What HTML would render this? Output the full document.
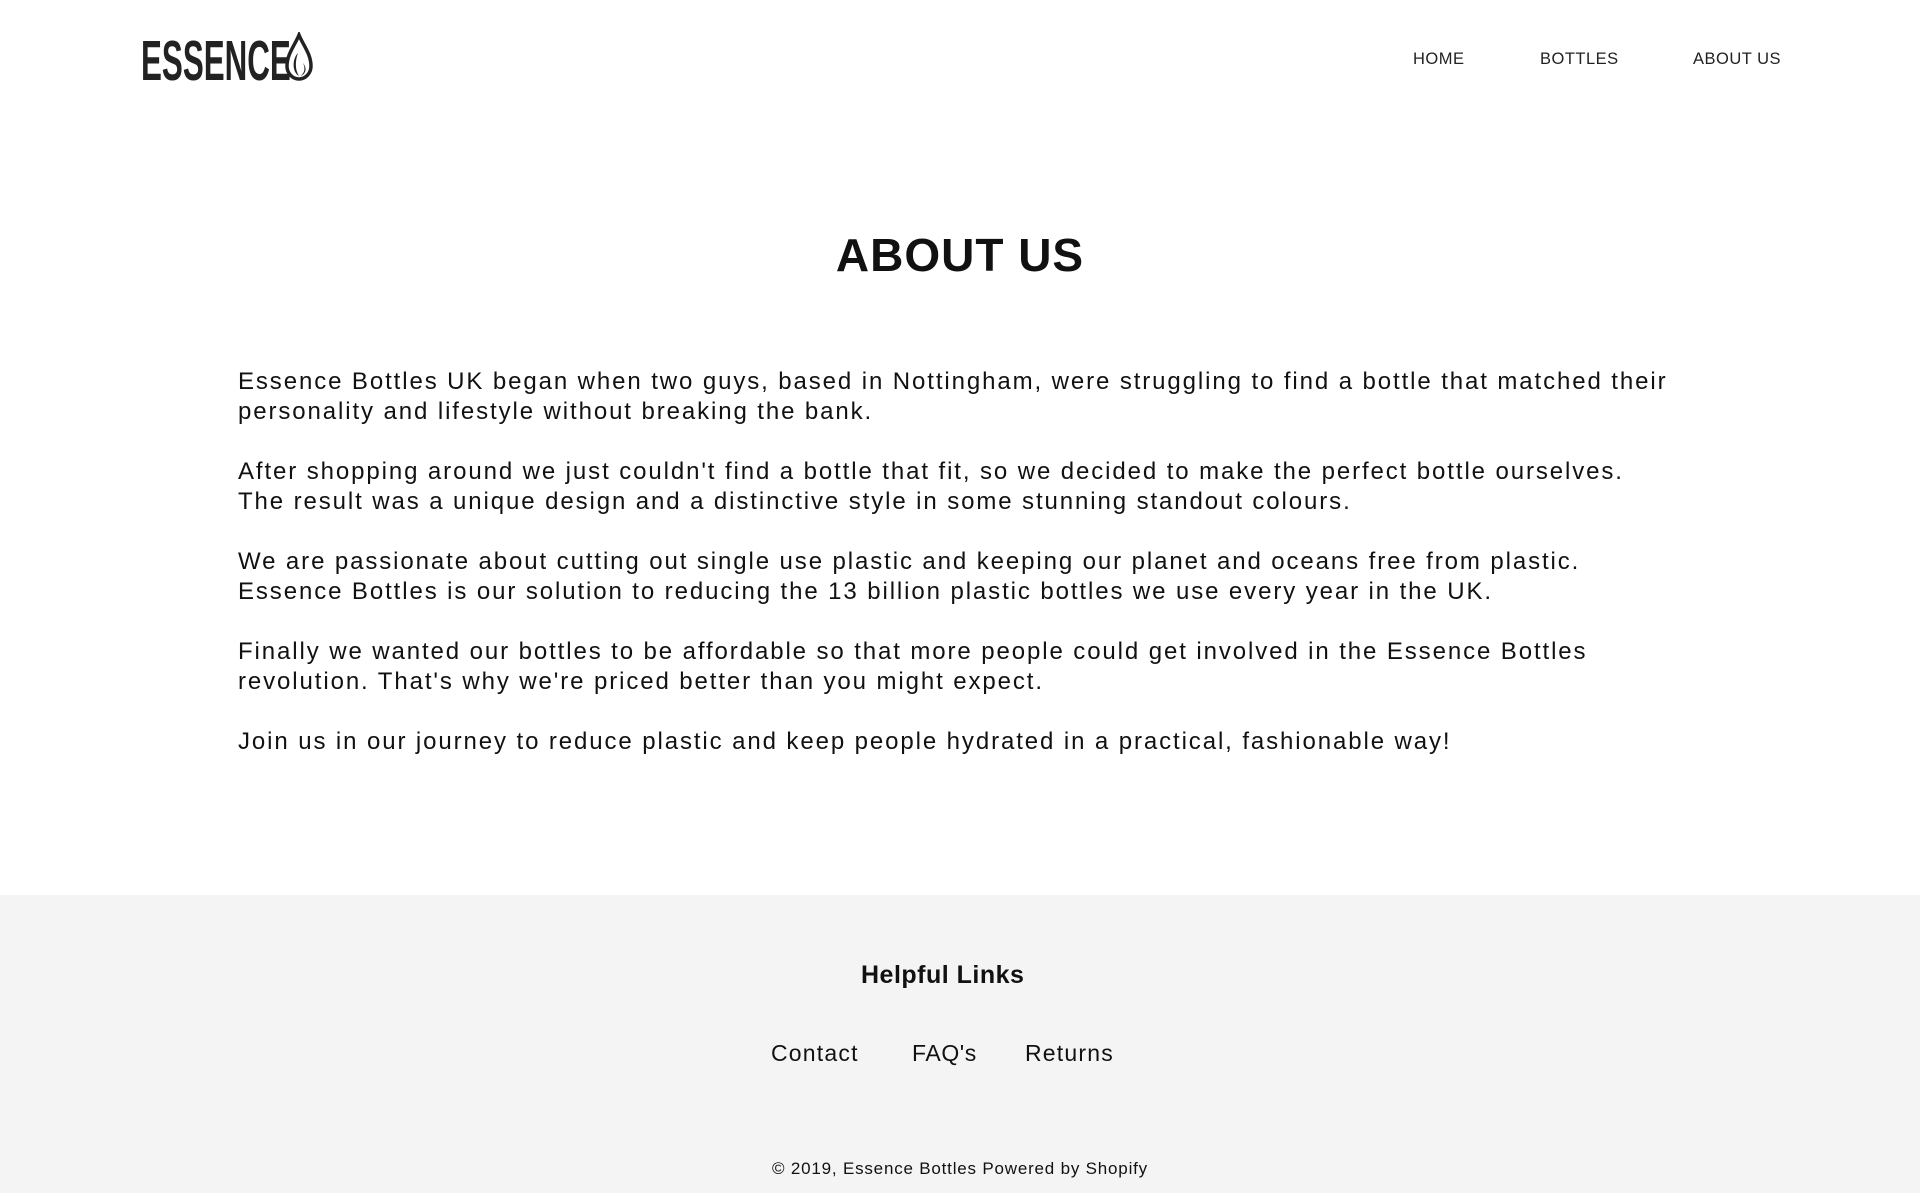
<!DOCTYPE html>
<html><head><meta charset="utf-8"><style>
*{margin:0;padding:0;box-sizing:border-box}
body{width:1920px;height:1193px;background:#fff;font-family:"Liberation Sans",sans-serif;color:#111;position:relative;overflow:hidden}
.logo{position:absolute;left:141px;top:30px;height:55px;width:200px}
.logo span{position:absolute;left:0;top:3px;font-weight:bold;font-size:57px;display:inline-block;transform:scaleX(.55);transform-origin:left top;color:#222;line-height:1}
.logo svg{position:absolute;left:143px;top:2px}
nav a{position:absolute;top:50px;font-size:16.5px;color:#222;text-decoration:none;letter-spacing:.5px}
h1{position:absolute;top:228px;left:0;width:1920px;text-align:center;font-size:46px;letter-spacing:1px}
.txt{position:absolute;left:238px;top:367px;font-size:24px;line-height:30px;letter-spacing:1.9px;white-space:nowrap}
.txt p{margin-bottom:30px}
footer{position:absolute;top:895px;left:0;width:1920px;height:298px;background:#f4f4f4}
.hl{position:absolute;top:66px;left:861px;font-weight:bold;font-size:25px;letter-spacing:.5px}
.fl{position:absolute;top:145px;font-size:23px;letter-spacing:1.2px}
.cp{position:absolute;top:264px;width:100%;text-align:center;font-size:17px;letter-spacing:.8px}
</style></head><body>
<div class="logo"><span>ESSENCE</span>
<svg width="30" height="52" viewBox="0 0 30 52"><path d="M15 3 C11 13 3 22 3 34 A12 13 0 0 0 27 34 C27 22 19 13 15 3Z" fill="none" stroke="#222" stroke-width="3.5"/><path d="M14 21 C8 27 8 40 15 44 C11 38 11 29 14 21Z M19 31 C22 37 20 42 16 44 C21 43 24 37 19 31Z" fill="#222"/></svg></div>
<nav><a style="left:1413px">HOME</a><a style="left:1540px">BOTTLES</a><a style="left:1693px">ABOUT US</a></nav>
<h1>ABOUT US</h1>
<div class="txt">
<p>Essence Bottles UK began when two guys, based in Nottingham, were struggling to find a bottle that matched their<br>personality and lifestyle without breaking the bank.</p>
<p>After shopping around we just couldn't find a bottle that fit, so we decided to make the perfect bottle ourselves.<br>The result was a unique design and a distinctive style in some stunning standout colours.</p>
<p>We are passionate about cutting out single use plastic and keeping our planet and oceans free from plastic.<br>Essence Bottles is our solution to reducing the 13 billion plastic bottles we use every year in the UK.</p>
<p>Finally we wanted our bottles to be affordable so that more people could get involved in the Essence Bottles<br>revolution. That's why we're priced better than you might expect.</p>
<p>Join us in our journey to reduce plastic and keep people hydrated in a practical, fashionable way!</p>
</div>
<footer>
<div class="hl">Helpful Links</div>
<div class="fl" style="left:771px">Contact</div>
<div class="fl" style="left:912px;letter-spacing:.6px">FAQ's</div>
<div class="fl" style="left:1025px">Returns</div>
<div class="cp">© 2019, Essence Bottles Powered by Shopify</div>
</footer>
</body></html>
